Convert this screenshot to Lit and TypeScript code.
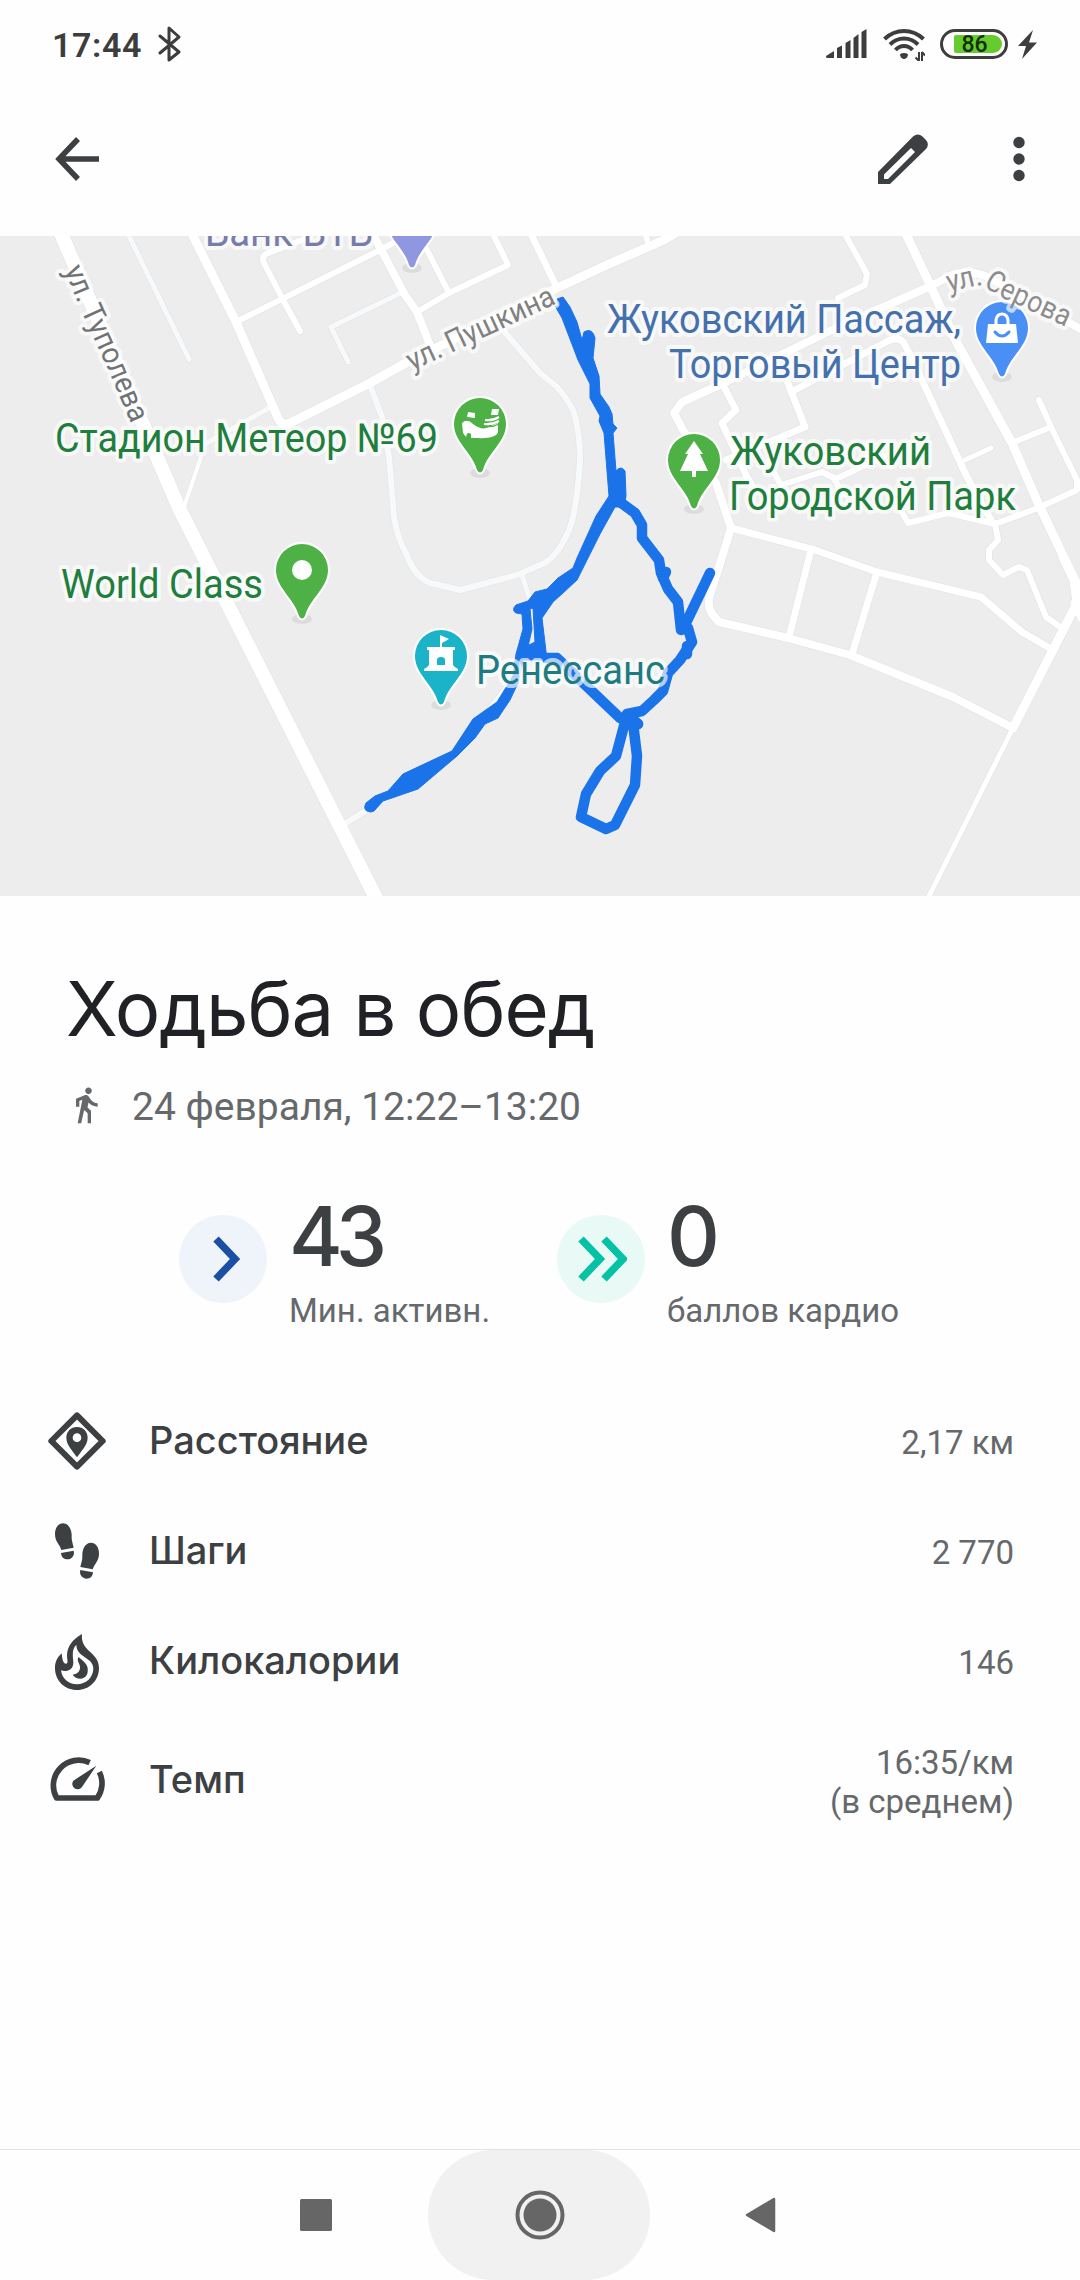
import { LitElement, css, html, svg } from 'lit';
import { customElement, property } from 'lit/decorators.js';

type Road = { d: string; w: number; faint?: boolean };

const ROADS: Road[] = [
  { d: 'M129 236L189 359', w: 5, faint: true },
  { d: 'M401 293L331 327L348 362', w: 5, faint: true },
  { d: 'M269 408L203 445', w: 5, faint: true },
  {
    d: 'M370 385L382 417L389 457L394 517Q398 540 406 553Q414 576 430 583L460 590L517 575L540 565Q556 560 569 530Q577 510 580 460Q580 430 573 410Q565 395 557 387L540 373L503 330',
    w: 6,
    faint: true
  },
  { d: 'M522 575L530 600', w: 5, faint: true },
  { d: 'M346 823L367 810M480 722L508 686', w: 6, faint: true },
  { d: 'M201 457L184 507', w: 4 },
  { d: 'M310 237L266 254Q261 257 264 263L282 298L300 331', w: 6 },
  { d: 'M236 322L380 250L395 242', w: 6 },
  { d: 'M374 236L405 295L417 312L431 348', w: 8 },
  { d: 'M417 312L449 293L508 265L494 236', w: 6 },
  { d: 'M425 246L449 293', w: 6 },
  { d: 'M532 236L557 288', w: 7 },
  { d: 'M193 236L236 322L278 418Q282 427 290 423L368 384L406 363L557 288L609 264L664 240L680 230', w: 9 },
  { d: 'M647 240L644 228', w: 6 },
  { d: 'M846 236L867 274L865 285L838 298', w: 6 },
  { d: 'M907 236L931 287L957 343L1012 443L1038 503L1070 570L1082 594', w: 9 },
  { d: 'M1084 331L988 277Q965 268 948 277L931 286L838 327L726 382L682 402L674 413L683 430L716 483L731 528', w: 8 },
  { d: 'M791 392L888 341Q899 336 904 343L914 363L967 477L991 520', w: 7 },
  { d: 'M786 378L805 427L726 460', w: 7 },
  { d: 'M724 387L736 410L722 423L747 477L756 492', w: 7 },
  { d: 'M768 462L781 485L822 472L836 479L884 456M833 477L843 495', w: 6 },
  { d: 'M965 460L991 448', w: 5 },
  { d: 'M1039 400L1051 427L1077 480V490L1038 508L995 524L948 513L908 523L898 505', w: 6 },
  { d: 'M1012 443L1051 427', w: 6 },
  { d: 'M995 523L998 540L989 550V560L1003 575L1019 567L1027 570L1046 617L1063 629', w: 6 },
  { d: 'M731 528L815 550L877 572L981 597L1022 632L1053 650', w: 7 },
  { d: 'M731 528L719 567L709 598Q708 608 712 614L719 622L788 638L850 655L953 697L1013 728', w: 8 },
  { d: 'M811 550L789 637', w: 7 },
  { d: 'M877 572L852 654', w: 7 },
  { d: 'M1013 728L929 896', w: 5 },
  { d: 'M1013 728L1077 603L1074 580L1063 557M1075 603L1082 618', w: 9 },
  { d: 'M62 236L179 508L375 896L382 910', w: 14 }
];

const TRACK = [
  'M620 502L635 513L642 525V538L659 560L661 573L668 589L678 602L681 630L688 628L692 642L680 660L668 673L663 691L654 700L642 711L627 714L638 724',
  'M666 572L663 578M687 646L687 654M685 625L710 573',
  'M546 658H557L620 718L638 724M625 722L616 756L600 771L586 794L581 817L606 829L615 825L635 785L637 756L633 723'
];

// outline of the stretch where several passes of the walk overlap
const TRACK_FILL =
  'M555 306L562 318L578 360L590 384V398L600 416L599 421L604 433L609 496L596 516L577 558L573 568L558 578L547 589L535 592L528 601L516 605Q511 610 516 613L522 614L523 629L516 654L513 676L497 702L473 719L452 751L403 774L388 791L375 796L366 803Q363 809 367 811T374 811L383 801L418 789L457 756L475 738L485 724L498 718L510 700L518 683L523 660H547L542 618L553 602L563 593L577 580L600 534L615 507H624L626 496L625 471Q621 465 616 471L613 433L617 428L613 424L612 414L609 407L600 394L599 376L593 358L595 338Q592 327 584 332L582 340L577 322L570 307L563 297L557 299L559 306Z' +
  'M530 609L533 608L535 642L529 645L527 651L532 629Z';

type Pin = { x: number; y: number; color: string; glyph: unknown };

const PINS: Pin[] = [
  { x: 412, y: 219, color: '#8e97e0', glyph: svg`` },
  {
    x: 480,
    y: 424,
    color: '#4db146',
    glyph: svg`
      <path fill="#fff" d="M-18 -1Q-13 -6 -7 0Q2 7 9 3L18 -1V8Q16 15 -3 14L-9 14V10Q-13 7 -14 13L-17 9Z"/>
      <path fill="#fff" d="M-12 -12L-5 -11V-6L-13 -7ZM12 -15H19L18 -9H11Z"/>
      <path fill="none" stroke="#fff" stroke-width="2.2" d="M19 -7Q13 -3 5 -4M19 -3Q12 1 4 0"/>
      <path fill="none" stroke="#4db146" stroke-width="1.2" d="M19 0Q12 4 3 2"/>`
  },
  { x: 302, y: 570, color: '#4db146', glyph: svg`<circle r="10" fill="#fff"/>` },
  {
    x: 441,
    y: 656,
    color: '#1ab3c8',
    glyph: svg`<path fill="#fff" d="M-1 -21L8 -17L1 -13V-9H14V-6H12V9Q13 11 17 13V15H-17V13Q-13 11 -12 9V-6H-14V-9H-1ZM-4 9H4V4Q4 1 0 1T-4 4Z"/>`
  },
  {
    x: 694,
    y: 460,
    color: '#4db146',
    glyph: svg`<path fill="#fff" d="M0 -19L9 -6H6L14 11H2V17H-2V11H-14L-6 -6H-9Z"/>`
  },
  {
    x: 1002,
    y: 328,
    color: '#4a8ff5',
    glyph: svg`
      <path fill="#fff" d="M-14 -4H14L16 15H-16Z"/>
      <path fill="none" stroke="#fff" stroke-width="3" d="M-6 -4V-8Q-5 -14 0 -14T6 -8V-4"/>
      <path fill="none" stroke="#4a8ff5" stroke-width="3" stroke-linecap="round" d="M-7 4Q0 12 7 4"/>`
  }
];

const PLACES = [
  { text: 'Банк ВТБ', x: 205, y: 246, w: 168, color: '#767cab' },
  { text: 'Стадион Метеор №69', x: 55, y: 452, w: 383, color: '#1e7e3c' },
  { text: 'World Class', x: 61, y: 598, w: 202, color: '#1e7e3c' },
  { text: 'Жуковский', x: 730, y: 465, w: 201, color: '#1e7e3c' },
  { text: 'Городской Парк', x: 729, y: 510, w: 287, color: '#1e7e3c' },
  { text: 'Жуковский Пассаж,', x: 607, y: 333, w: 354, color: '#4471ae' },
  { text: 'Торговый Центр', x: 669, y: 378, w: 292, color: '#4471ae' },
  { text: 'Ренессанс', x: 476, y: 684, w: 189, color: '#1c7c82' }
];

const STREETS = [
  { id: 'tupoleva', text: 'ул. Туполева', d: 'M64 270L84 317L109 372L134 430', w: 168, color: '#707376' },
  { id: 'pushkina', text: 'ул. Пушкина', d: 'M412 371L564 300', w: 160, color: '#808080' },
  { id: 'serova', text: 'ул.Серова', d: 'M949 292L974 286Q980 284 986 288L1003 298L1090 338', w: 127, color: '#8c8c8c' }
];

@customElement('route-map')
export class RouteMap extends LitElement {
  static styles = css`
    :host {
      display: block;
      height: 660px;
    }
    svg {
      display: block;
      width: 100%;
      height: 100%;
    }
    .road {
      fill: none;
      stroke-linecap: round;
      stroke-linejoin: round;
    }
    .track {
      fill: none;
      stroke: #1a73e8;
      stroke-width: 10.5;
      stroke-linecap: round;
      stroke-linejoin: round;
    }
    .track-fill {
      fill: #1a73e8;
      fill-rule: evenodd;
      stroke: #1a73e8;
      stroke-linejoin: round;
    }
    text {
      font-family: Roboto, 'Liberation Sans', sans-serif;
      stroke: rgba(255, 255, 255, 0.68);
      stroke-width: 8;
      stroke-linejoin: round;
      paint-order: stroke;
    }
    .place {
      font-size: 40px;
    }
    .street {
      font-size: 30px;
    }
  `;

  private _pin(p: Pin) {
    return svg`
      <g transform="translate(${p.x} ${p.y})">
        <ellipse cy="49" rx="10" ry="5" fill="#000" opacity=".07"/>
        <path fill=${p.color} stroke="#fff" stroke-width="4" paint-order="stroke"
          d="M0 -26A26 26 0 0 1 26 0C26 18 8 28 3 46Q0 51 -3 46C-8 28 -26 18 -26 0A26 26 0 0 1 0 -26Z"/>
        ${p.glyph}
      </g>`;
  }

  render() {
    return html`
      <svg viewBox="0 236 1080 660">
        <rect y="236" width="1080" height="660" fill="#ededed" />
        ${ROADS.map(
          (r) => svg`<path class="road" d=${r.d} stroke=${r.faint ? '#e3e6e8' : '#e2e4e6'} stroke-width=${r.w + 1.4}/>`
        )}
        ${ROADS.map(
          (r) => svg`<path class="road" d=${r.d} stroke=${r.faint ? '#f7f9fa' : '#ffffff'} stroke-width=${r.w}/>`
        )}
        ${TRACK.map((d) => svg`<path class="track" d=${d}/>`)}
        <path class="track-fill" d=${TRACK_FILL} />
        ${PINS.map((p) => this._pin(p))}
        ${PLACES.map(
          (p) => svg`<text class="place" x=${p.x} y=${p.y} fill=${p.color}
            textLength=${p.w} lengthAdjust="spacingAndGlyphs">${p.text}</text>`
        )}
        ${STREETS.map(
          (s) => svg`
            <path id=${s.id} d=${s.d} fill="none"/>
            <text class="street" fill=${s.color}><textPath href="#${s.id}" textLength=${s.w} lengthAdjust="spacingAndGlyphs">${s.text}</textPath></text>`
        )}
      </svg>
    `;
  }
}

const ICONS = {
  distance: svg`
    <path fill="none" stroke="currentColor" stroke-width="18" stroke-linejoin="round" d="M90 13L167 90L90 167L13 90Z"/>
    <path fill="currentColor" fill-rule="evenodd" d="M90 48C109 48 122 62 122 80C122 103 101 121 90 139C79 121 58 103 58 80C58 62 71 48 90 48ZM90 67A13 13 0 1 0 90 93A13 13 0 1 0 90 67Z"/>`,
  steps: svg`
    <g id="foot" fill="currentColor">
      <path d="M48 7C66 7 75 28 74 46C73 58 78 68 80 80L43 87C38 70 24 62 24 40C24 20 34 7 48 7Z"/>
      <path d="M42 96L80 89C84 104 74 114 62 115C50 115 43 108 42 96Z"/>
    </g>
    <use href="#foot" transform="translate(180 58) scale(-1 1)"/>`,
  calories: svg`
    <path fill="currentColor" fill-rule="evenodd" d="M105 9C78 24 60 46 60 74C60 84 65 98 57 98C48 98 46 85 44 67C30 80 24 94 24 111C24 150 54 177 90 177C128 177 156 148 156 111C156 62 99 62 105 9ZM88 41C88 80 139 78 139 112C139 141 116 160 90 160C64 160 45 143 42 118C58 124 79 117 79 95C79 80 72 56 88 41Z"/>
    <path fill="currentColor" d="M94 78C88 92 101 99 99 112C97 126 86 130 77 131C88 148 114 147 121 128C126 108 119 96 94 78Z"/>`,
  pace: svg`
    <path fill="none" stroke="currentColor" stroke-width="17" stroke-linejoin="round" d="M128 38A76 76 0 0 0 29 144H151A76 76 0 0 0 157 66"/>
    <path fill="currentColor" d="M148 47L105 111A16 16 0 1 1 79 92Z"/>`
};

@customElement('metric-row')
export class MetricRow extends LitElement {
  @property() icon: keyof typeof ICONS = 'distance';
  @property() label = '';
  @property({ attribute: false }) lines: string[] = [];

  static styles = css`
    :host {
      display: grid;
      grid-template-columns: 60px 1fr auto;
      align-items: center;
      box-sizing: border-box;
      height: 110px;
      padding: 0 66px 0 47px;
      color: #3c4043;
    }
    svg {
      width: 60px;
      height: 60px;
    }
    .label {
      padding: 0 0 2px 42px;
      font: 500 38px/48px Inter, Roboto, sans-serif;
      letter-spacing: 0;
    }
    .value {
      padding-top: 3px;
      font-size: 33px;
      line-height: 39px;
      color: #66696c;
      text-align: right;
    }
  `;

  render() {
    return html`
      <svg viewBox="0 0 180 180">${ICONS[this.icon]}</svg>
      <div class="label">${this.label}</div>
      <div class="value">${this.lines.map((l) => html`<div>${l}</div>`)}</div>
    `;
  }
}

@customElement('app-root')
export class AppRoot extends LitElement {
  static styles = css`
    :host {
      display: flex;
      flex-direction: column;
      width: 1080px;
      height: 2280px;
      overflow: hidden;
      background: #fefefe;
      color: #3c4043;
      font-family: Roboto, 'Liberation Sans', sans-serif;
    }
    svg {
      display: block;
      flex-shrink: 0;
    }
    .status {
      display: flex;
      align-items: center;
      height: 88px;
      padding: 0 43px 0 52px;
      box-sizing: border-box;
      color: #3d3d3d;
    }
    .time {
      width: 105px;
      font-size: 34px;
      font-weight: 600;
      letter-spacing: 0.6px;
      padding-top: 2px;
    }
    .signal {
      margin-left: auto;
    }
    .wifi {
      margin-left: 16px;
    }
    .battery {
      display: flex;
      align-items: center;
      justify-content: center;
      box-sizing: border-box;
      width: 68px;
      height: 30px;
      margin: 0 10px 0 15px;
      border: 3px solid #3d3d3d;
      border-radius: 15px;
    }
    .charge {
      width: 48px;
      height: 18px;
      margin-left: 7px;
      box-sizing: border-box;
      padding-left: 8px;
      border-radius: 2px 9px 9px 2px;
      background: #66cb2c;
      color: #12300a;
      font: 500 23px/19px Roboto, sans-serif;
    }
    .appbar {
      display: flex;
      align-items: center;
      height: 142px;
      margin-bottom: 6px;
      padding: 0 55px;
    }
    .edit {
      margin-left: auto;
    }
    .more {
      margin-left: 85px;
    }
    h1 {
      margin: 66px 0 0 66px;
      font: 400 76px/92px Inter, Roboto, sans-serif;
      letter-spacing: -1px;
      color: #202124;
      white-space: nowrap;
    }
    .when {
      display: flex;
      align-items: center;
      height: 50px;
      margin: 28px 0 0 66px;
      font-size: 39px;
      color: #66696c;
    }
    .when svg {
      margin-bottom: 5px;
    }
    .when span {
      margin-left: 26px;
    }
    .scores {
      display: grid;
      grid-template-columns: 378px auto;
      margin: 60px 0 0 179px;
      height: 194px;
    }
    .score {
      display: grid;
      grid-template-columns: 88px auto;
      column-gap: 22px;
      align-content: start;
      justify-content: start;
    }
    .badge {
      grid-row: span 2;
      display: flex;
      align-items: center;
      justify-content: center;
      width: 88px;
      height: 88px;
      margin-top: 23px;
      border-radius: 50%;
      background: #eff3fa;
      color: #1a4fa3;
    }
    .badge.cardio {
      background: #e8f9f6;
      color: #06c2a4;
    }
    .number {
      font: 500 82px/90px Inter, Roboto, sans-serif;
      letter-spacing: -7px;
    }
    .unit {
      margin-top: 9px;
      font-size: 33px;
      line-height: 40px;
      color: #66696c;
      white-space: nowrap;
    }
    .tall {
      height: 128px;
    }
    .nav {
      display: grid;
      grid-template-columns: 428px 222px 1fr;
      align-items: center;
      height: 130px;
      margin-top: auto;
      background: #fefefe;
      box-shadow: 0 -1px 0 #e2e2e2;
    }
    .recent {
      margin-left: 300px;
    }
    .home {
      display: flex;
      align-items: center;
      justify-content: center;
      height: 130px;
      padding-left: 2px;
      box-sizing: border-box;
      border-radius: 65px;
      background: #f1f1f1;
    }
    .back {
      margin-left: 94px;
    }
  `;

  private _statusBar() {
    return html`
      <div class="status">
        <div class="time">17:44</div>
        <svg width="24" height="36" viewBox="0 0 24 36" fill="none" stroke="currentColor" stroke-width="3" stroke-linecap="round" stroke-linejoin="round">
          <path d="M3 10L22 26L12 34V2L22 11L3 27" />
        </svg>
        <svg class="signal" width="41" height="30" viewBox="0 0 41 30" fill="currentColor">
          <path d="M0 27L8 22V29H1Q0 29 0 27ZM11 19L16 16.500V29H11ZM19.500 14L24.500 11V29H19.500ZM27.500 9L32.500 5V29H27.500ZM35.500 3L40.500 0V29H35.500Z" />
        </svg>
        <svg class="wifi" width="42" height="34" viewBox="0 0 42 34" fill="none" stroke="currentColor" stroke-width="4">
          <path d="M1.500 12Q10 4 21 4T40.500 12M7 17.500Q13 11.500 21 11.500T35 17.500M12.500 23Q16 19 21 19T29.500 23" />
          <path d="M21 26Q25 26 25 28Q24 32 21 32T17 28Q17 26 21 26Z" fill="currentColor" stroke="none" />
          <path d="M36 25V34M39 25V34M36 34L32.500 30.500M39 25L42 28.500" stroke-width="2" />
        </svg>
        <div class="battery"><div class="charge">86</div></div>
        <svg width="19" height="29" viewBox="0 0 19 29" fill="currentColor">
          <path d="M15 0L0 16H8L4 29L19 12.500H11Z" />
        </svg>
      </div>
    `;
  }

  private _appBar() {
    return html`
      <div class="appbar">
        <svg width="44" height="44" viewBox="0 0 44 44" fill="none" stroke="currentColor" stroke-width="5.500">
          <path d="M44 22H5M23 2L4 22L23 42" />
        </svg>
        <svg class="edit" width="50" height="50" viewBox="0 0 50 50" fill="currentColor" fill-rule="evenodd">
          <path d="M0 50V38L35 2.500Q40 -1.500 44.500 2.500L47.500 5.500Q52 10 48 15L12 50ZM6 45H10L37 18L33 14L6 40.500Z" />
        </svg>
        <svg class="more" width="12" height="46" viewBox="0 0 12 46" fill="currentColor">
          <circle cx="6" cy="6.500" r="5.700" /><circle cx="6" cy="23" r="5.700" /><circle cx="6" cy="39.500" r="5.700" />
        </svg>
      </div>
    `;
  }

  render() {
    return html`
      ${this._statusBar()} ${this._appBar()}
      <route-map></route-map>
      <h1>Ходьба в обед</h1>
      <div class="when">
        <svg width="40" height="40" viewBox="0 0 24 24" fill="currentColor">
          <path d="M13.500 5.500c1.100 0 2-.9 2-2s-.9-2-2-2-2 .9-2 2 .9 2 2 2zM9.800 8.900L7 23h2.100l1.800-8 2.100 2v6h2v-7.500l-2.100-2 .6-3C14.800 12 16.800 13 19 13v-2c-1.900 0-3.500-1-4.300-2.400l-1-1.600c-.4-.6-1-1-1.700-1-.3 0-.5.1-.8.1L6 8.300V13h2V9.600l1.800-.7" />
        </svg>
        <span>24 февраля, 12:22–13:20</span>
      </div>
      <div class="scores">
        <div class="score">
          <div class="badge">
            <svg width="52" height="46" viewBox="0 0 52 46" fill="none" stroke="currentColor" stroke-width="7.500">
              <path d="M19 3L38 23L19 43" />
            </svg>
          </div>
          <div class="number">43</div>
          <div class="unit">Мин. активн.</div>
        </div>
        <div class="score">
          <div class="badge cardio">
            <svg width="52" height="46" viewBox="0 0 52 46" fill="none" stroke="currentColor" stroke-width="7.500">
              <path d="M6 3L25 23L6 43M29 3L48 23L29 43" />
            </svg>
          </div>
          <div class="number">0</div>
          <div class="unit">баллов кардио</div>
        </div>
      </div>
      <metric-row icon="distance" label="Расстояние" .lines=${['2,17 км']}></metric-row>
      <metric-row icon="steps" label="Шаги" .lines=${['2 770']}></metric-row>
      <metric-row icon="calories" label="Килокалории" .lines=${['146']}></metric-row>
      <metric-row class="tall" icon="pace" label="Темп" .lines=${['16:35/км', '(в среднем)']}></metric-row>
      <div class="nav">
        <svg class="recent" width="32" height="32"><rect width="32" height="32" rx="1.500" fill="#666" /></svg>
        <div class="home">
          <svg width="50" height="50" viewBox="0 0 50 50">
            <circle cx="25" cy="25" r="22.500" fill="none" stroke="#666" stroke-width="4" />
            <circle cx="25" cy="25" r="16.500" fill="#666" />
          </svg>
        </div>
        <svg class="back" width="34" height="36" viewBox="0 0 34 36">
          <path d="M3 18L30 2V34Z" fill="#666" stroke="#666" stroke-width="2.500" stroke-linejoin="round" />
        </svg>
      </div>
    `;
  }
}
